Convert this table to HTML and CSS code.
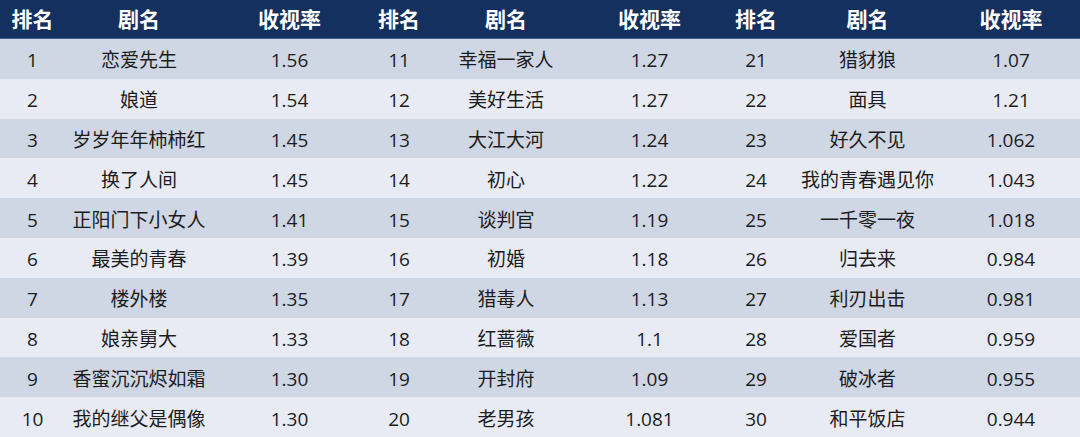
FILE: index.html
```html
<!DOCTYPE html>
<html lang="zh-CN">
<head>
<meta charset="utf-8">
<title>收视率排名</title>
<link rel="stylesheet" href="styles.css">
</head>
<body>
<div class="table">
  <div class="row head">
    <div>排名</div><div>剧名</div><div>收视率</div>
    <div>排名</div><div>剧名</div><div>收视率</div>
    <div>排名</div><div>剧名</div><div>收视率</div>
  </div>
  <div class="row dark"><div>1</div><div>恋爱先生</div><div>1.56</div><div>11</div><div>幸福一家人</div><div>1.27</div><div>21</div><div>猎豺狼</div><div>1.07</div></div>
  <div class="row light"><div>2</div><div>娘道</div><div>1.54</div><div>12</div><div>美好生活</div><div>1.27</div><div>22</div><div>面具</div><div>1.21</div></div>
  <div class="row dark"><div>3</div><div>岁岁年年柿柿红</div><div>1.45</div><div>13</div><div>大江大河</div><div>1.24</div><div>23</div><div>好久不见</div><div>1.062</div></div>
  <div class="row light"><div>4</div><div>换了人间</div><div>1.45</div><div>14</div><div>初心</div><div>1.22</div><div>24</div><div>我的青春遇见你</div><div>1.043</div></div>
  <div class="row dark"><div>5</div><div>正阳门下小女人</div><div>1.41</div><div>15</div><div>谈判官</div><div>1.19</div><div>25</div><div>一千零一夜</div><div>1.018</div></div>
  <div class="row light"><div>6</div><div>最美的青春</div><div>1.39</div><div>16</div><div>初婚</div><div>1.18</div><div>26</div><div>归去来</div><div>0.984</div></div>
  <div class="row dark"><div>7</div><div>楼外楼</div><div>1.35</div><div>17</div><div>猎毒人</div><div>1.13</div><div>27</div><div>利刃出击</div><div>0.981</div></div>
  <div class="row light"><div>8</div><div>娘亲舅大</div><div>1.33</div><div>18</div><div>红蔷薇</div><div>1.1</div><div>28</div><div>爱国者</div><div>0.959</div></div>
  <div class="row dark"><div>9</div><div>香蜜沉沉烬如霜</div><div>1.30</div><div>19</div><div>开封府</div><div>1.09</div><div>29</div><div>破冰者</div><div>0.955</div></div>
  <div class="row light"><div>10</div><div>我的继父是偶像</div><div>1.30</div><div>20</div><div>老男孩</div><div>1.081</div><div>30</div><div>和平饭店</div><div>0.944</div></div>
</div>
</body>
</html>
```
FILE: styles.css
```css
html, body {
  margin: 0;
  padding: 0;
  background: #e8ebf3;
}
.table {
  width: 1080px;
  height: 437px;
  overflow: hidden;
  font-family: "Open Sans", "Noto Sans CJK SC", sans-serif;
  color: #1c1c1c;
}
.row {
  display: grid;
  grid-template-columns: 65px 148px 153px 66px 148px 139px 74px 149px 138px;
  height: 39.8px;
  align-items: center;
  text-align: center;
  font-size: 19px;
  line-height: 1;
}
.row > div {
  white-space: nowrap;
  padding-top: 4px;
}
.head {
  height: 38px;
  background: #13305f;
  color: #ffffff;
  font-size: 21px;
  font-weight: bold;
  border-bottom: 1px solid #3f5c8c;
}
.head > div {
  padding-top: 0;
}
.dark {
  background: #cfd6e4;
}
.light {
  background: #e8ebf3;
}
```
